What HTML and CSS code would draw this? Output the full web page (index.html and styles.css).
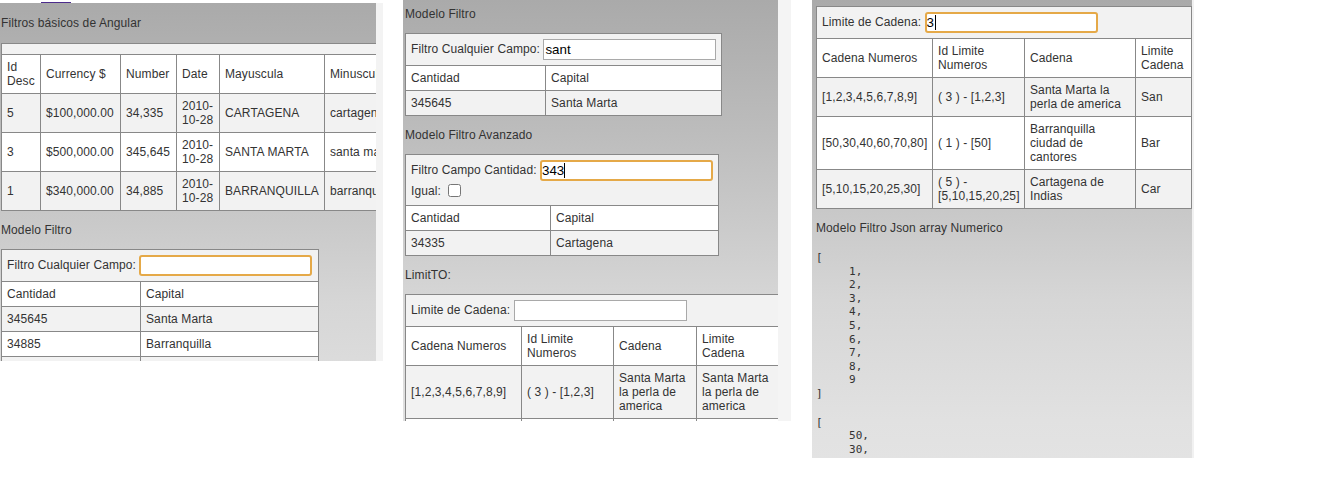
FILE: index.html
```html
<!DOCTYPE html>
<html lang="es">
<head>
<meta charset="utf-8">
<title>Filtros Angular</title>
<link rel="stylesheet" href="styles.css">
</head>
<body>
<div class="board">

  <section class="shot shot-basic">
    <div class="visited-line"></div>
    <div class="frame frame-basic">
      <div class="page-title">Filtros básicos de Angular</div>
      <table class="grid grid-basic">
        <colgroup><col class="w39"><col class="w80"><col class="w56"><col class="w43"><col class="w105"><col class="w100"></colgroup>
        <tr><td colspan="6"></td></tr>
        <tr><td>Id Desc</td><td>Currency $</td><td>Number</td><td>Date</td><td>Mayuscula</td><td>Minuscula</td></tr>
        <tr><td>5</td><td>$100,000.00</td><td>34,335</td><td>2010-10-28</td><td>CARTAGENA</td><td>cartagena</td></tr>
        <tr><td>3</td><td>$500,000.00</td><td>345,645</td><td>2010-10-28</td><td>SANTA MARTA</td><td>santa marta</td></tr>
        <tr><td>1</td><td>$340,000.00</td><td>34,885</td><td>2010-10-28</td><td>BARRANQUILLA</td><td>barranquilla</td></tr>
      </table>

      <div class="label">Modelo Filtro</div>
      <table class="grid grid-small">
        <colgroup><col class="w139"><col class="w178"></colgroup>
        <tr><td class="filter-cell" colspan="2">Filtro Cualquier Campo: <span class="field"><input class="text-input is-focused" type="text" value=""></span></td></tr>
        <tr><td>Cantidad</td><td>Capital</td></tr>
        <tr><td>345645</td><td>Santa Marta</td></tr>
        <tr><td>34885</td><td>Barranquilla</td></tr>
        <tr><td>34335</td><td>Cartagena</td></tr>
      </table>
    </div>
  </section>

  <section class="shot shot-filter">
    <div class="frame frame-filter">
      <div class="label">Modelo Filtro</div>
      <table class="grid grid-any">
        <colgroup><col class="w140"><col class="w176"></colgroup>
        <tr><td class="filter-cell" colspan="2">Filtro Cualquier Campo: <span class="field"><input class="text-input" type="text" value="sant"></span></td></tr>
        <tr><td>Cantidad</td><td>Capital</td></tr>
        <tr><td>345645</td><td>Santa Marta</td></tr>
      </table>

      <div class="label">Modelo Filtro Avanzado</div>
      <table class="grid grid-adv">
        <colgroup><col class="w145"><col class="w168"></colgroup>
        <tr><td class="filter-cell" colspan="2">
          <div class="adv-line">Filtro Campo Cantidad: <span class="field"><input class="text-input is-focused" type="text" value="343"><span class="caret caret-3ch"></span></span></div>
          <div class="check-line">Igual: <input class="check" type="checkbox"></div>
        </td></tr>
        <tr><td>Cantidad</td><td>Capital</td></tr>
        <tr><td>34335</td><td>Cartagena</td></tr>
      </table>

      <div class="label">LimitTO:</div>
      <table class="grid grid-limit-a">
        <colgroup><col class="w116"><col class="w92"><col class="w83"><col class="w82"></colgroup>
        <tr><td class="filter-cell" colspan="4">Limite de Cadena: <span class="field"><input class="text-input" type="text" value=""></span></td></tr>
        <tr><td>Cadena Numeros</td><td>Id Limite Numeros</td><td>Cadena</td><td>Limite Cadena</td></tr>
        <tr><td>[1,2,3,4,5,6,7,8,9]</td><td>( 3 ) - [1,2,3]</td><td>Santa Marta la perla de america</td><td>Santa Marta la perla de america</td></tr>
        <tr><td>[50,30,40,60,70,80]</td><td>( 1 ) - [50]</td><td>Barranquilla ciudad de cantores</td><td>Barranquilla ciudad de cantores</td></tr>
      </table>
    </div>
  </section>

  <section class="shot shot-limit">
    <div class="frame frame-limit">
      <table class="grid grid-limit-b">
        <colgroup><col class="w116"><col class="w92"><col class="w111"><col class="w56"></colgroup>
        <tr><td class="filter-cell" colspan="4">Limite de Cadena: <span class="field"><input class="text-input is-focused" type="text" value="3"><span class="caret caret-1ch"></span></span></td></tr>
        <tr><td>Cadena Numeros</td><td>Id Limite Numeros</td><td>Cadena</td><td>Limite Cadena</td></tr>
        <tr><td>[1,2,3,4,5,6,7,8,9]</td><td>( 3 ) - [1,2,3]</td><td>Santa Marta la perla de america</td><td>San</td></tr>
        <tr><td>[50,30,40,60,70,80]</td><td>( 1 ) - [50]</td><td>Barranquilla ciudad de cantores</td><td>Bar</td></tr>
        <tr><td>[5,10,15,20,25,30]</td><td>( 5 ) - [5,10,15,20,25]</td><td>Cartagena de Indias</td><td>Car</td></tr>
      </table>

      <div class="label label-json">Modelo Filtro Json array Numerico</div>
<pre class="json">[
     1,
     2,
     3,
     4,
     5,
     6,
     7,
     8,
     9
]</pre>
<pre class="json">[
     50,
     30,
     40,
     60,
     70,
     80
]</pre>
    </div>
  </section>

</div>
</body>
</html>
```

FILE: styles.css
```css
* {
  box-sizing: border-box;
}

body {
  margin: 0;
  background: #fff;
  color: #333;
  font: 12px/14px "Liberation Sans", Arial, sans-serif;
  letter-spacing: 0.1px;
}

.board {
  display: flex;
  align-items: flex-start;
}

.shot {
  flex: none;
  display: flex;
  flex-direction: column;
}

.shot-filter {
  margin-left: 20px;
}

.shot-limit {
  margin-left: 21px;
}

.visited-line {
  width: 30px;
  height: 1px;
  margin: 2px 0 0 41px;
  background: #4c2c8c;
}

.frame {
  overflow: hidden;
  background: linear-gradient(to bottom, #aaaaaa 0px, #bcbcbc 130px, #cbcbcb 230px, #d6d6d6 300px, #e1e1e1 420px, #e4e4e4 480px);
}

.frame-basic {
  width: 383px;
  height: 358px;
  border-right: 7px solid #f3f3f3;
  padding-left: 1px;
}

.frame-filter {
  width: 388px;
  height: 421px;
  border-right: 13px solid #f4f4f4;
  padding: 7px 0 0 2px;
}

.frame-limit {
  width: 382px;
  height: 458px;
  border-right: 2px solid #f1f1f1;
  padding: 6px 0 0 4px;
}

.page-title {
  height: 40px;
  line-height: 40px;
  white-space: nowrap;
}

.label {
  margin: 12px 0;
  line-height: 14px;
  white-space: nowrap;
}

.frame-filter > .label:first-child {
  margin-top: 0;
}

.label-json {
  margin-bottom: 16px;
}

/* tables */
.grid {
  border-collapse: collapse;
  table-layout: fixed;
}

.grid td {
  border: 1px solid #888;
  padding: 5px;
  vertical-align: middle;
  text-align: left;
}

.grid td.filter-cell {
  white-space: nowrap;
}

.grid tr:nth-child(odd) {
  background: #f2f2f2;
}

.grid tr:nth-child(even) {
  background: #fff;
}

.grid-basic { width: 424px; }
.grid-small { width: 318px; }
.grid-any { width: 317px; }
.grid-adv { width: 314px; }
.grid-limit-a { width: 374px; }
.grid-limit-b { width: 376px; }

.w39 { width: 39px; }
.w43 { width: 43px; }
.w56 { width: 56px; }
.w80 { width: 80px; }
.w82 { width: 82px; }
.w83 { width: 83px; }
.w92 { width: 92px; }
.w100 { width: 100px; }
.w105 { width: 105px; }
.w111 { width: 111px; }
.w116 { width: 116px; }
.w139 { width: 139px; }
.w140 { width: 140px; }
.w145 { width: 145px; }
.w168 { width: 168px; }
.w176 { width: 176px; }
.w178 { width: 178px; }

/* inputs */
.field {
  position: relative;
  display: inline-block;
  vertical-align: middle;
}

.text-input {
  display: block;
  width: 173px;
  height: 21px;
  margin: 0;
  padding: 0 1px;
  border: 1px solid #a9a9a9;
  border-radius: 0;
  background: #fff;
  color: #000;
  font: 13.33px "Liberation Sans", Arial, sans-serif;
  letter-spacing: 0;
  outline: none;
}

.text-input.is-focused {
  border: 2px solid #e5a948;
  border-radius: 3px;
  padding: 0;
}

.caret {
  position: absolute;
  top: 3px;
  width: 1px;
  height: 15px;
  background: #000;
}

.caret-3ch { left: 24px; }
.caret-1ch { left: 10px; }

.check-line {
  height: 19px;
  padding-top: 1px;
  line-height: 19px;
}

.check {
  width: 13px;
  height: 13px;
  margin: 0 0 0 4px;
  vertical-align: -2px;
}

.json {
  margin: 15px 0;
  font: 11px/13.6px "DejaVu Sans Mono", monospace;
  letter-spacing: 0;
  color: #333;
}
```
